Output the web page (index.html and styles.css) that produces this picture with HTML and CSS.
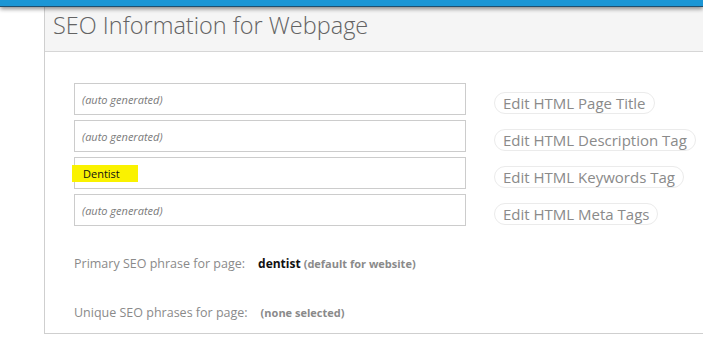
FILE: index.html
```html
<!DOCTYPE html>
<html>
<head>
<meta charset="utf-8">
<link rel="stylesheet" href="styles.css">
</head>
<body>
<div class="topbar"></div>
<div class="panel">
  <div class="panel-header">
    <h1 class="title">SEO Information for Webpage</h1>
  </div>
  <div class="panel-body">
    <div class="rows">
      <div class="row">
        <div class="field placeholder">(auto generated)</div>
        <span class="pill">Edit HTML Page Title</span>
      </div>
      <div class="row">
        <div class="field placeholder">(auto generated)</div>
        <span class="pill">Edit HTML Description Tag</span>
      </div>
      <div class="row">
        <div class="field filled"><span class="mark"></span><span class="value">Dentist</span></div>
        <span class="pill">Edit HTML Keywords Tag</span>
      </div>
      <div class="row">
        <div class="field placeholder">(auto generated)</div>
        <span class="pill">Edit HTML Meta Tags</span>
      </div>
    </div>
    <div class="info">
      <span class="label">Primary SEO phrase for page:</span>
      <span class="phrase">dentist</span>
      <span class="note">(default for website)</span>
    </div>
    <div class="info second">
      <span class="label">Unique SEO phrases for page:</span>
      <span class="note">(none selected)</span>
    </div>
  </div>
</div>
</body>
</html>
```
FILE: styles.css
```css
html, body {
  margin: 0;
  padding: 0;
  background: #ffffff;
  font-family: "Open Sans", "Liberation Sans", sans-serif;
  overflow: hidden;
}

.topbar {
  position: relative;
  z-index: 2;
  height: 6px;
  background: #1b96d5;
  border-bottom: 1px solid #1f4f6e;
  box-shadow: 0 2px 4px rgba(0, 0, 0, 0.45);
}

.panel {
  margin-left: 44px;
  border-left: 1px solid #cfcfcf;
  border-bottom: 1px solid #cfcfcf;
}

.panel-header {
  height: 45px;
  box-sizing: border-box;
  background: #f5f5f5;
  border-bottom: 1px solid #d6d6d6;
  padding: 2px 0 0 8px;
}

.title {
  margin: 0;
  font-size: 23.5px;
  font-weight: 300;
  line-height: 33px;
  color: #636363;
}

.panel-body {
  padding: 31px 0 11px 29px;
}

.rows {
  display: flex;
  flex-direction: column;
  gap: 5px;
}

.row {
  display: flex;
  align-items: flex-end;
  gap: 28px;
}

.field {
  position: relative;
  width: 392px;
  height: 32px;
  box-sizing: border-box;
  border: 1px solid #cccccc;
  padding: 0 7px;
  display: flex;
  align-items: center;
  font-size: 11px;
}

.placeholder {
  font-style: italic;
  color: #7a7a7a;
}

.filled {
  color: #111;
  padding-left: 8px;
}

.mark {
  position: absolute;
  left: -3px;
  top: 7px;
  width: 66px;
  height: 17px;
  background: #faf200;
}

.value {
  position: relative;
}

.pill {
  height: 22px;
  box-sizing: border-box;
  margin-bottom: 1px;
  border: 1px solid #ebebeb;
  border-radius: 11px;
  padding: 0 8px;
  font-size: 15px;
  line-height: 20px;
  color: #8a8a8a;
  white-space: nowrap;
}

.info {
  margin-top: 27px;
  height: 20px;
  display: flex;
  align-items: center;
  font-size: 12.5px;
  color: #8a8a8a;
}

.info.second {
  margin-top: 29px;
}

.label {
  margin-right: 13px;
}

.phrase {
  font-size: 12px;
  font-weight: 700;
  color: #111;
  margin-right: 3px;
}

.note {
  font-size: 11px;
  font-weight: 700;
  color: #8a8a8a;
}
```
